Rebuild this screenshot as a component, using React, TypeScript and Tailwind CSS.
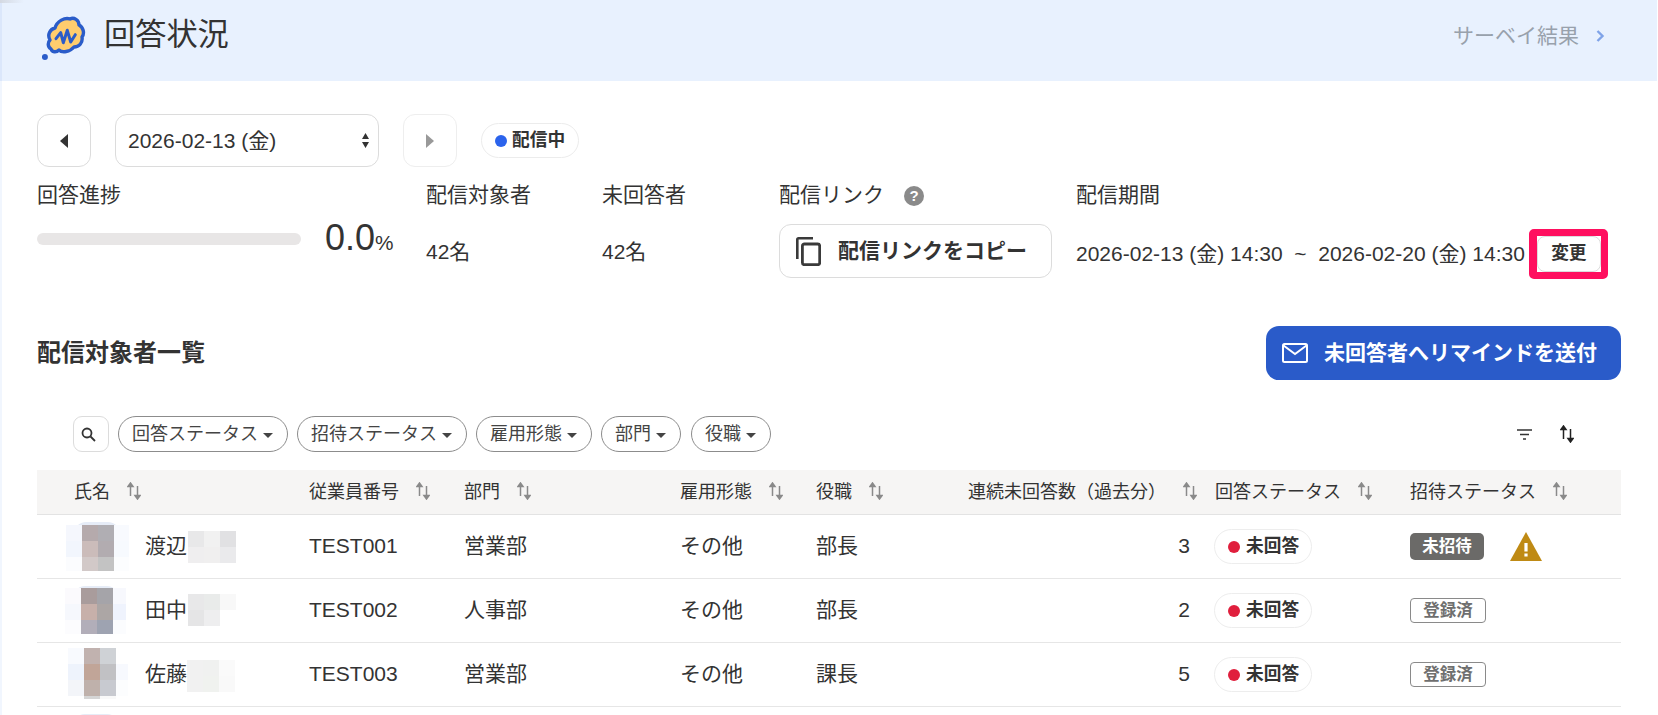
const sortIcon = (
  <svg width="14" height="18" viewBox="0 0 14 18" className="-mt-[3px] shrink-0 text-[#8a8a8a]">
    <path d="M3.5 14V2M1 4.5 3.5 1 6 4.5Z M10.5 4v12M8 13.5 10.5 17 13 13.5Z" fill="currentColor" stroke="currentColor" strokeWidth="1.5" />
  </svg>
);

type AvatarData = {
  cols: string;
  rows: string;
  top: string;
  left: string;
  cap: string;
  cells: string[];
};

type Row = {
  name: string;
  id: string;
  dept: string;
  role: string;
  count: number;
  invite: 'none' | 'done';
  nameMargin: string;
  avatar: AvatarData;
  blur: string[];
  blurMargin: string;
};

const rows: Row[] = [
  {
    name: '渡辺',
    id: 'TEST001',
    dept: '営業部',
    role: '部長',
    count: 3,
    invite: 'none',
    nameMargin: 'ml-[16px]',
    avatar: {
      cols: 'grid-cols-[16px_16px_16px_15px]',
      rows: 'grid-rows-[16px_16px_14px]',
      top: 'mt-[10px]',
      left: 'ml-[29px] w-[63px]',
      cap: 'left-[8px] -top-[3px]',
      cells: [
        'bg-[#f5f7fd]', 'bg-[#b5aaac]', 'bg-[#b0aeb3]', 'bg-[#f8fafe]',
        'bg-[#f2f6fd]', 'bg-[#cbbcba]', 'bg-[#b2acb0]', 'bg-[#f7fafe]',
        'bg-[#fbfcfe]', 'bg-[#d2c9c8]', 'bg-[#c3c3c3]', 'bg-[#fcfdfe]',
      ],
    },
    blur: ['bg-[#e8e8e9]', 'bg-[#f1f1f1]', 'bg-[#e1e1e3]', 'bg-[#efeeef]', 'bg-[#f0efef]', 'bg-[#eaeaec]'],
    blurMargin: 'ml-[1px] mt-[16px]',
  },
  {
    name: '田中',
    id: 'TEST002',
    dept: '人事部',
    role: '部長',
    count: 2,
    invite: 'done',
    nameMargin: 'ml-[19px]',
    avatar: {
      cols: 'grid-cols-[16px_16px_16px_13px]',
      rows: 'grid-rows-[16px_16px_14px]',
      top: 'mt-[9px]',
      left: 'ml-[28px] w-[61px]',
      cap: 'left-[8px] -top-[2px]',
      cells: [
        'bg-[#fbfafd]', 'bg-[#a99c9c]', 'bg-[#a5a4a9]', 'bg-[#f7f8fd]',
        'bg-[#f6f8fd]', 'bg-[#c7b0aa]', 'bg-[#aca6a5]', 'bg-[#eff3fd]',
        'bg-[#fcfcfe]', 'bg-[#b2aeb9]', 'bg-[#9ea3b1]', 'bg-[#fbfcfe]',
      ],
    },
    blur: ['bg-[#e8e8e9]', 'bg-[#e9ebea]', 'bg-[#f8f8f8]', 'bg-[#e5e5e6]', 'bg-[#eeeeef]', 'bg-white'],
    blurMargin: 'ml-[1px] mt-[15px]',
  },
  {
    name: '佐藤',
    id: 'TEST003',
    dept: '営業部',
    role: '課長',
    count: 5,
    invite: 'done',
    nameMargin: 'ml-[17px]',
    avatar: {
      cols: 'grid-cols-[16px_16px_16px_12px]',
      rows: 'grid-rows-[16px_16px_16px_3px]',
      top: 'mt-[5px]',
      left: 'ml-[31px] w-[60px]',
      cap: 'left-[8px] top-0',
      cells: [
        'bg-[#f8fafe]', 'bg-[#c1b2af]', 'bg-[#cfd2d6]', 'bg-white',
        'bg-[#eef3fc]', 'bg-[#c1a598]', 'bg-[#c1c1c4]', 'bg-[#f7f9fe]',
        'bg-[#f3f5f9]', 'bg-[#bfb1ab]', 'bg-[#c8cad0]', 'bg-[#fcfdfe]',
        'bg-white', 'bg-[#d5d5d5]', 'bg-[#f9f9f9]', 'bg-white',
      ],
    },
    blur: ['bg-[#f1f1f1]', 'bg-[#f0f1f0]', 'bg-[#fafafa]', 'bg-[#f1f1f1]', 'bg-[#f0f2ef]', 'bg-[#f9f9f9]'],
    blurMargin: 'ml-0 mt-[17px]',
  },
];

const gridCols = 'grid-cols-[272px_155px_216px_136px_124px_257px_213px_211px]';

function Head({ label, className = '' }: { label: string; className?: string }) {
  return (
    <div className={`flex items-center gap-[17px] ${className}`}>
      <span>{label}</span>
      {sortIcon}
    </div>
  );
}

function FilterPill({ label, width }: { label: string; width: string }) {
  return (
    <button className={`flex h-9 items-center justify-between rounded-full border border-[#8c8c8c] pl-[13px] pr-[14px] text-[18px] text-[#444] ${width}`}>
      <span>{label}</span>
      <svg width="10" height="5" viewBox="0 0 10 5" className="mt-[2px]">
        <path d="M0 0h10L5 5Z" fill="#444" />
      </svg>
    </button>
  );
}

function App() {
  return (
    <div className="relative h-screen overflow-hidden bg-white font-['Liberation_Sans','Noto_Sans_CJK_JP',sans-serif] text-[#333]">
      <div className="absolute left-0 top-0 h-[3px] w-[24px] bg-gradient-to-r from-[#d4d9e2] to-transparent" />

      {/* Header */}
      <header className="mr-[1px] flex h-[81px] items-center justify-between border-l-2 border-[#dbe7fb] bg-[#e8f1fe] pb-[10px] pl-[40px] pr-[52px]">
        <div className="flex items-center gap-[18px]">
          <svg width="44" height="44" viewBox="0 0 44 44" className="mt-[5px] shrink-0">
            <circle cx="2.9" cy="41" r="3" fill="#2a5cc9" />
            <path
              d="M9 33C5 30 6 26 8 24C5 19 8 13 13 12C15 5 23 1 28 3C32 1 37 4 37 9C41 11 43 17 40 21C41 27 37 31 32 31C28 36 20 37 17 34C14 37 10 36 9 33Z"
              fill="#ffcd6e"
              stroke="#2a5cc9"
              strokeWidth="3.4"
              strokeLinejoin="round"
            />
            <path d="M14 22.7 18.7 16.7 21.3 26.7 25.3 14.3 28.7 26 33.3 18.7" fill="none" stroke="#2a5cc9" strokeWidth="3" strokeLinejoin="round" strokeLinecap="round" />
          </svg>
          <h1 className="-mt-[1px] text-[31.2px] font-normal leading-none text-[#333]">回答状況</h1>
        </div>
        <a className="flex items-center gap-[17px] text-[21px] text-[#98a1ac]">
          サーベイ結果
          <svg width="9" height="12" viewBox="0 0 9 12">
            <path d="M1.5 1 6.5 6 1.5 11" fill="none" stroke="#7fa3e8" strokeWidth="2.4" />
          </svg>
        </a>
      </header>

      <main className="border-l-2 border-[#f1f6fe] pl-[35px] pr-[37px]">
        {/* Date nav */}
        <div className="flex items-center gap-6 pt-[33px]">
          <button className="flex h-[53px] w-[54px] items-center justify-center rounded-[12px] border border-[#dcdcdc]">
            <svg width="9" height="14" viewBox="0 0 9 14"><path d="M8 0v14L0 7Z" fill="#333" /></svg>
          </button>
          <div className="flex h-[53px] w-[264px] items-center justify-between rounded-[12px] border border-[#dcdcdc] pl-[12px] pr-[9px] text-[21px]">
            <span>2026-02-13 (金)</span>
            <svg width="7" height="15" viewBox="0 0 7 15">
              <path d="M3.5 0 7 6H0Z M3.5 15 0 9H7Z" fill="#333" />
            </svg>
          </div>
          <button className="flex h-[53px] w-[54px] items-center justify-center rounded-[12px] border border-[#eeeeee]">
            <svg width="9" height="14" viewBox="0 0 9 14"><path d="M0 0v14L8 7Z" fill="#999" /></svg>
          </button>
          <div className="flex h-[35px] w-[98px] items-center gap-[5px] rounded-full border border-[#ececec] pl-[13px] text-[17.7px] font-bold">
            <span className="h-3 w-3 rounded-full bg-[#2b63ec]" />
            配信中
          </div>
        </div>

        {/* Stats */}
        <div className="grid grid-cols-[389px_176px_177px_297px_1fr] pt-[13px] text-[21px]">
          <div>
            <div className="h-[30px] leading-[30px]">回答進捗</div>
            <div className="mt-[14px] flex h-[54px] items-center">
              <div className="mb-[24px] h-3 w-[264px] rounded-full bg-[#e8e6e6]" />
              <div className="mb-[24px] ml-[24px] flex items-baseline">
                <span className="text-[36px] leading-none">0.0</span>
                <span className="text-[20.8px]">%</span>
              </div>
            </div>
          </div>
          <div>
            <div className="h-[30px] leading-[30px]">配信対象者</div>
            <div className="mt-[14px] flex h-[54px] items-center pt-[2px]">42名</div>
          </div>
          <div>
            <div className="h-[30px] leading-[30px]">未回答者</div>
            <div className="mt-[14px] flex h-[54px] items-center pt-[2px]">42名</div>
          </div>
          <div>
            <div className="flex h-[30px] items-center gap-5">
              配信リンク
              <span className="mt-[2px] flex h-5 w-5 items-center justify-center rounded-full bg-[#8a8a8a] text-[15px] font-bold text-white">?</span>
            </div>
            <button className="mt-[14px] flex h-[54px] w-[273px] items-center rounded-[12px] border border-[#dcdcdc] pl-[16px] font-bold">
              <svg width="25" height="29" viewBox="0 0 25 29" fill="none" stroke="#3a3a3a" className="shrink-0">
                <path d="M1.3 22V2.5Q1.3 1.3 2.5 1.3H17" strokeWidth="2.6" />
                <rect x="6.4" y="7" width="17.3" height="20.7" rx="2" strokeWidth="2.8" />
              </svg>
              <span className="ml-[17px]">配信リンクをコピー</span>
            </button>
          </div>
          <div>
            <div className="h-[30px] leading-[30px]">配信期間</div>
            <div className="mt-[14px] flex h-[54px] items-center pt-[6px]">
              <span className="whitespace-pre">2026-02-13 (金) 14:30  ~  2026-02-20 (金) 14:30</span>
              <div className="ml-[4px] h-[50px] w-[79px] shrink-0 rounded-[5px] border-y-[7px] border-l-[8px] border-r-[7px] border-[#ff0f5f] bg-white">
                <button className="flex h-full w-full items-center justify-center rounded-[8px] border border-[#dcdcdc] pb-[2px] text-[17.7px] font-bold">
                  変更
                </button>
              </div>
            </div>
          </div>
        </div>

        {/* List title */}
        <div className="mt-[48px] flex items-center justify-between">
          <h2 className="text-[24px] font-bold">配信対象者一覧</h2>
          <button className="flex h-[54px] w-[355px] items-center rounded-[13px] bg-[#2a5bc9] pl-[16px] text-[21px] font-bold text-white">
            <svg width="26" height="20" viewBox="0 0 26 20" fill="none" stroke="white" strokeWidth="2" className="shrink-0">
              <rect x="1" y="1" width="24" height="18" rx="1.5" />
              <path d="M1.5 2.5 13 11 24.5 2.5" />
            </svg>
            <span className="ml-[16px]">未回答者へリマインドを送付</span>
          </button>
        </div>

        {/* Toolbar */}
        <div className="mt-[36px] flex items-center pl-[36px]">
          <button className="flex h-9 w-9 items-center justify-center rounded-[9px] border border-[#dcdcdc] pr-[6px]">
            <svg width="15" height="15" viewBox="0 0 15 15" fill="none" stroke="#333" strokeWidth="1.8">
              <circle cx="6" cy="6" r="4.5" />
              <path d="M9.5 9.5 14 14" />
            </svg>
          </button>
          <div className="ml-[9px] flex items-center gap-[9px]">
            <FilterPill label="回答ステータス" width="w-[170px]" />
            <FilterPill label="招待ステータス" width="w-[170px]" />
            <FilterPill label="雇用形態" width="w-[116px]" />
            <FilterPill label="部門" width="w-[80px]" />
            <FilterPill label="役職" width="ml-[1px] w-[80px]" />
          </div>
          <div className="ml-auto mr-[47px] flex items-center gap-[28px]">
            <svg width="15" height="11" viewBox="0 0 15 11" fill="none" stroke="#333" strokeWidth="1.5">
              <path d="M0 1h15M3 5.5h9M6 10h3" />
            </svg>
            <svg width="14" height="18" viewBox="0 0 14 18" className="text-[#222]">
              <path d="M3.5 14V2M1 4.5 3.5 1 6 4.5Z M10.5 4v12M8 13.5 10.5 17 13 13.5Z" fill="currentColor" stroke="currentColor" strokeWidth="1.5" />
            </svg>
          </div>
        </div>

        {/* Table */}
        <div className="mt-[18px] text-[21px]">
          <div className={`grid h-[45px] items-center border-b border-[#e3e3e3] bg-[#f6f5f4] text-[18px] ${gridCols}`}>
            <Head label="氏名" className="pl-[37px]" />
            <Head label="従業員番号" />
            <Head label="部門" />
            <Head label="雇用形態" />
            <Head label="役職" />
            <Head label="連続未回答数（過去分）" className="justify-end" />
            <Head label="回答ステータス" className="pl-[18px]" />
            <Head label="招待ステータス" />
          </div>

          {rows.map((row) => (
            <div key={row.id} className={`grid h-[64px] items-center border-b border-[#e6e6e6] ${gridCols}`}>
              <div className="flex h-full items-start">
                <div className={`relative shrink-0 ${row.avatar.left} ${row.avatar.top}`}>
                  <div className={`absolute h-3 w-[46px] rounded-t-full bg-[#e6ecf7] ${row.avatar.cap}`} />
                  <div className={`relative grid ${row.avatar.cols} ${row.avatar.rows}`}>
                    {row.avatar.cells.map((cell, i) => (
                      <div key={i} className={cell} />
                    ))}
                  </div>
                </div>
                <span className={`self-center pb-[2px] ${row.nameMargin}`}>{row.name}</span>
                <div className={`grid grid-cols-[16px_16px_16px] grid-rows-[16px_16px] self-start ${row.blurMargin}`}>
                  {row.blur.map((cell, i) => (
                    <div key={i} className={cell} />
                  ))}
                </div>
              </div>
              <div className="pb-[2px]">{row.id}</div>
              <div className="pb-[2px]">{row.dept}</div>
              <div className="pb-[2px]">その他</div>
              <div className="pb-[2px]">{row.role}</div>
              <div className="pb-[2px] pr-[7px] text-right">{row.count}</div>
              <div className="pl-[17px]">
                <div className="flex h-[35px] w-[98px] items-center gap-[6px] rounded-full border border-[#ededed] pl-[13px] text-[17.7px] font-bold">
                  <span className="h-3 w-3 rounded-full bg-[#e01f3d]" />
                  未回答
                </div>
              </div>
              <div className="flex items-center">
                {row.invite === 'none' ? (
                  <>
                    <span className="flex h-[27px] w-[74px] items-center justify-center rounded-[5px] bg-[#6b6a68] text-[16.5px] font-bold text-white">未招待</span>
                    <svg width="32" height="29" viewBox="0 0 32 29" className="ml-[26px]">
                      <path d="M16 0 32 29H0Z" fill="#bf8a14" />
                      <path d="M14.4 11h3.2v8.5h-3.2Z M14.4 21.5h3.2v3h-3.2Z" fill="white" />
                    </svg>
                  </>
                ) : (
                  <span className="flex h-[25px] w-[76px] items-center justify-center rounded-[4px] border border-[#8a8a8a] text-[16.5px] font-bold text-[#6f6f6f]">登録済</span>
                )}
              </div>
            </div>
          ))}

          {/* next row is cut off by the window */}
          <div className="h-[64px] pl-[36px] pt-[7px]">
            <div className="h-3 w-[46px] rounded-t-full bg-[#e6ecf7]" />
          </div>
        </div>
      </main>
    </div>
  );
}

export default App;
